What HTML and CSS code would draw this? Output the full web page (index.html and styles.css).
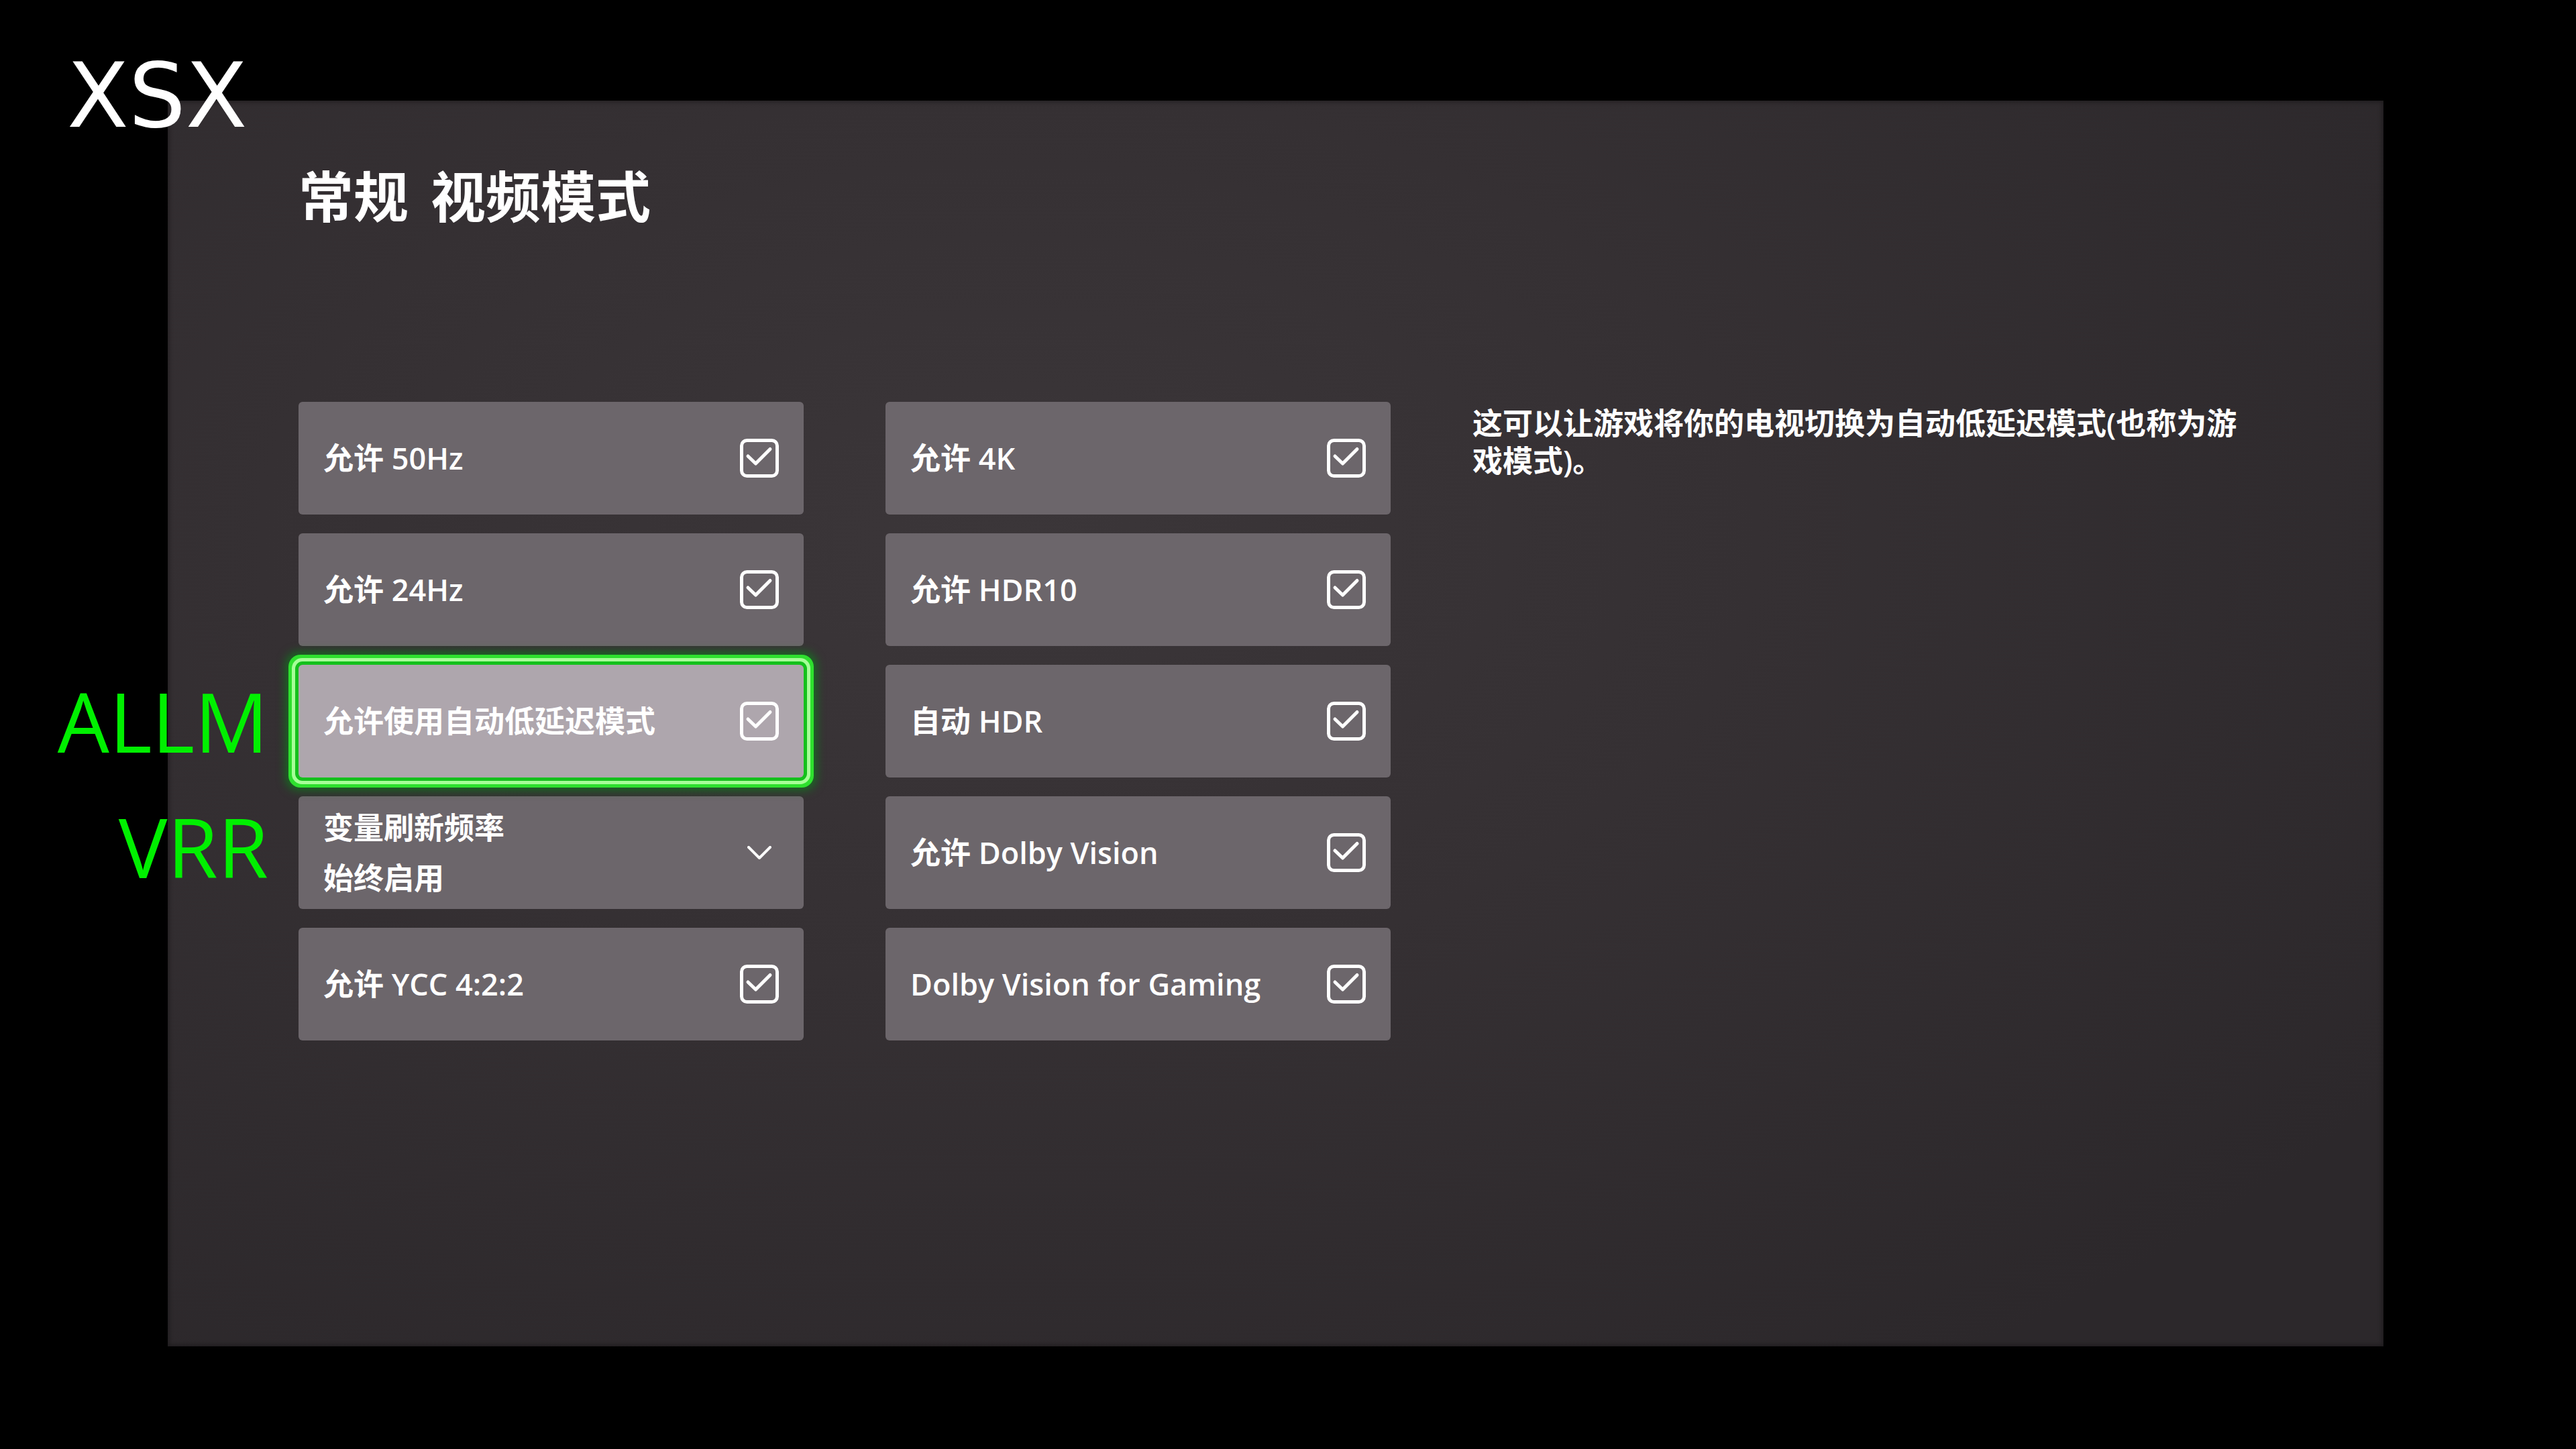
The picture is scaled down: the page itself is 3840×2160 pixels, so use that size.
FILE: index.html
```html
<!DOCTYPE html>
<html lang="zh-CN">

<head>
    <meta charset="utf-8">
    <title>视频模式</title>
    <link rel="stylesheet" href="styles.css">
</head>

<body>
    <!-- icons used by the tiles -->
    <svg class="defs" width="0" height="0">
        <symbol id="box-check" viewBox="0 0 58 58">
            <rect x="2.5" y="2.5" width="53" height="53" rx="8" fill="none" stroke="#fff" stroke-width="5" />
            <path d="M12 26 L23.5 37 L45 15.5" fill="none" stroke="#fff" stroke-width="5" stroke-linecap="round"
                stroke-linejoin="round" />
        </symbol>
        <symbol id="chevron" viewBox="0 0 36 20">
            <polyline points="2,2 18,18 34,2" fill="none" stroke="#fff" stroke-width="4" stroke-linecap="round"
                stroke-linejoin="round" />
        </symbol>
    </svg>

    <div class="stage">
        <div class="brand">XSX</div>

        <div class="notes">
            <div>ALLM</div>
            <div>VRR</div>
        </div>

        <div class="tv">
            <h1 class="title"><span>常规</span><span>视频模式</span></h1>

            <div class="panel">
                <div class="col">
                    <div class="tile">
                        <span class="label">允许 50Hz</span>
                        <span class="icon"><svg class="check"><use href="#box-check" /></svg></span>
                    </div>
                    <div class="tile">
                        <span class="label">允许 24Hz</span>
                        <span class="icon"><svg class="check"><use href="#box-check" /></svg></span>
                    </div>
                    <div class="tile focus">
                        <span class="label">允许使用自动低延迟模式</span>
                        <span class="icon"><svg class="check"><use href="#box-check" /></svg></span>
                    </div>
                    <div class="tile two">
                        <span class="label">
                            <span>变量刷新频率</span>
                            <span>始终启用</span>
                        </span>
                        <span class="icon"><svg class="chev"><use href="#chevron" /></svg></span>
                    </div>
                    <div class="tile">
                        <span class="label">允许 YCC 4:2:2</span>
                        <span class="icon"><svg class="check"><use href="#box-check" /></svg></span>
                    </div>
                </div>

                <div class="col">
                    <div class="tile">
                        <span class="label">允许 4K</span>
                        <span class="icon"><svg class="check"><use href="#box-check" /></svg></span>
                    </div>
                    <div class="tile">
                        <span class="label">允许 HDR10</span>
                        <span class="icon"><svg class="check"><use href="#box-check" /></svg></span>
                    </div>
                    <div class="tile">
                        <span class="label">自动 HDR</span>
                        <span class="icon"><svg class="check"><use href="#box-check" /></svg></span>
                    </div>
                    <div class="tile">
                        <span class="label">允许 Dolby Vision</span>
                        <span class="icon"><svg class="check"><use href="#box-check" /></svg></span>
                    </div>
                    <div class="tile">
                        <span class="label">Dolby Vision for Gaming</span>
                        <span class="icon"><svg class="check"><use href="#box-check" /></svg></span>
                    </div>
                </div>

                <p class="desc">这可以让游戏将你的电视切换为自动低延迟模式(也称为游戏模式)。</p>
            </div>
        </div>
    </div>
</body>

</html>
```

FILE: styles.css
```css
* {
    box-sizing: border-box;
}

body {
    margin: 0;
    background-color: #000;
    font-family: "Open Sans", "Noto Sans CJK SC", sans-serif;
    color: #fff;
}

.defs {
    position: absolute;
    width: 0;
    height: 0;
}

.stage {
    position: relative;
    width: 3840px;
    height: 2160px;
    padding: 150px 0 0 250px;
    overflow: hidden;
}

/* annotations lying over the photo */
.brand {
    position: absolute;
    left: 100px;
    top: 76px;
    z-index: 2;
    font-family: "DejaVu Sans", sans-serif;
    font-size: 134px;
    line-height: 1;
    color: #fff;
}

.notes {
    position: absolute;
    left: 0;
    top: 982px;
    width: 400px;
    z-index: 2;
    text-align: right;
    font-family: "Open Sans", sans-serif;
    font-size: 122px;
    line-height: 187px;
    color: #00f000;
}

/* the tv picture */
.tv {
    width: 3303px;
    height: 1857px;
    padding: 101px 0 0 195px;
    background: radial-gradient(ellipse 75% 80% at 38% 35%, #3b3639 0%, #353033 45%, #2c282b 100%);
    box-shadow: inset 0 0 6px 2px rgba(0, 0, 0, 0.35);
}

.title {
    display: flex;
    gap: 33px;
    margin: 0;
    font-size: 82px;
    font-weight: 700;
    line-height: 1;
}

.panel {
    display: flex;
    gap: 122px;
    margin-top: 266px;
}

.col {
    display: flex;
    flex-direction: column;
    gap: 28px;
    width: 753px;
}

.tile {
    display: flex;
    align-items: center;
    justify-content: space-between;
    height: 168px;
    padding: 0 37px;
    border-radius: 6px;
    background-color: #6c666b;
    font-size: 45px;
    font-weight: 600;
    line-height: 56px;
}

.tile.focus {
    position: relative;
    z-index: 1;
    background-color: #aea6ad;
    box-shadow:
        0 0 0 5px #14c01c,
        0 0 0 10px #a6ff98,
        0 0 0 15px #2ee02e,
        0 0 14px 19px rgba(0, 150, 20, 0.6);
}

.tile.two .label {
    display: flex;
    flex-direction: column;
    gap: 19px;
}

.icon {
    display: flex;
    justify-content: center;
    width: 58px;
}

.check {
    width: 58px;
    height: 58px;
}

.chev {
    width: 36px;
    height: 20px;
}

.desc {
    width: 1160px;
    margin: 4px 0 0;
    font-size: 45px;
    font-weight: 600;
    line-height: 56px;
}
```
